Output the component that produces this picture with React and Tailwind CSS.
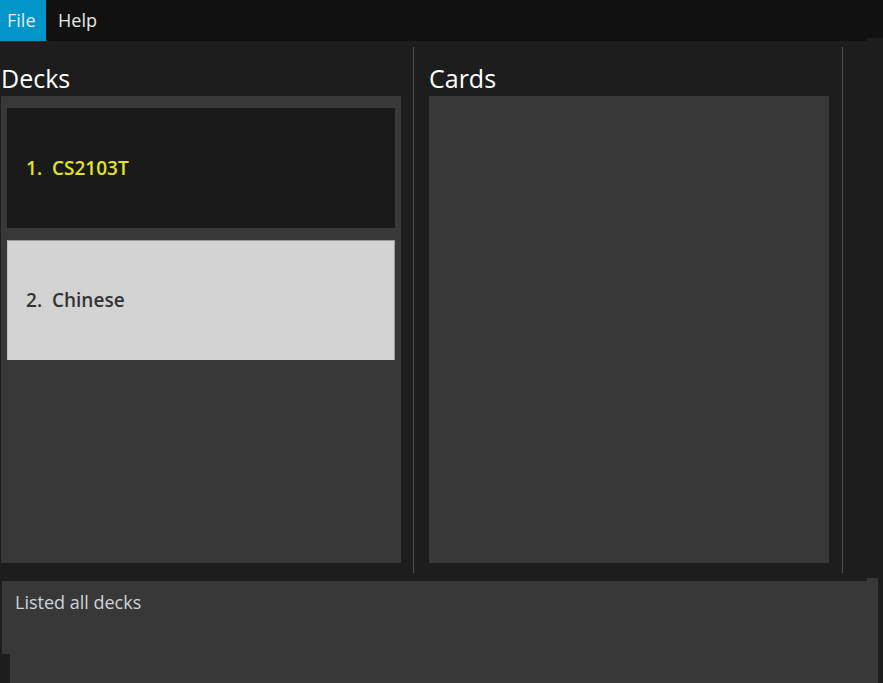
import React from 'react';

const decks = [
    { id: 1, name: 'CS2103T', selected: true },
    { id: 2, name: 'Chinese', selected: false },
];

const DeckCard = ({ deck }) => (
    <div
        className={
            deck.selected
                ? 'h-[120px] flex items-center pl-[19px] bg-[#1a1a1a] text-[#e3e32a]'
                : 'h-[120px] flex items-center pl-[18px] bg-[#d3d3d3] text-[#333333] border-t border-r border-l border-t-[#9c9c9c] border-r-[#a0a0a0] border-l-[#bdbdbd]'
        }
    >
        <span className="whitespace-pre text-[19px] font-semibold">
            {deck.id}.  {deck.name}
        </span>
    </div>
);

export default function App() {
    return (
        <div
            className="w-[883px] h-[683px] bg-[#1d1d1d] flex flex-col overflow-hidden"
            style={{ fontFamily: '"Open Sans", "Noto Sans", sans-serif' }}
        >
            {/* menu bar */}
            <div className="h-[41px] flex shrink-0">
                <div className="flex-1 flex bg-[#111111] text-[18px] text-[#e8e8e8]">
                    <div className="w-[46px] bg-[#0096c9] flex items-center pl-[7px]">File</div>
                    <div className="flex items-center pl-[12px]">Help</div>
                </div>
                <div className="w-[16px] flex flex-col">
                    <div className="h-[38px] bg-[#111111]" />
                </div>
            </div>

            {/* split pane */}
            <div className="h-[532px] flex pt-[6px] shrink-0">
                <div className="w-[413px] flex flex-col">
                    <div className="h-[49px] pt-[16px] pl-[1px] text-[25px] leading-[30px] text-white">Decks</div>
                    <div className="ml-[1px] w-[400px] h-[467px] bg-[#383838] p-[6px] pt-[12px] flex flex-col gap-[12px]">
                        {decks.map((d) => (
                            <DeckCard key={d.id} deck={d} />
                        ))}
                    </div>
                </div>
                <div className="w-px bg-[#505050]" />
                <div className="w-[428px] flex flex-col pl-[15px]">
                    <div className="h-[49px] pt-[16px] text-[25px] leading-[30px] text-white">Cards</div>
                    <div className="w-[400px] h-[467px] bg-[#383838]" />
                </div>
                <div className="w-px bg-[#505050]" />
            </div>

            {/* gap with scrollbar nub */}
            <div className="h-[8px] flex items-end shrink-0">
                <div className="ml-[867px] w-[11px] h-[3px] bg-[#383838]" />
            </div>

            {/* result display */}
            <div className="ml-[2px] w-[876px] h-[73px] bg-[#383838] pl-[13px] pt-[9px] text-[18px] leading-[24px] text-[#cdd3da] shrink-0">
                Listed all decks
            </div>
            <div className="ml-[10px] w-[868px] flex-1 bg-[#383838]" />
        </div>
    );
}
